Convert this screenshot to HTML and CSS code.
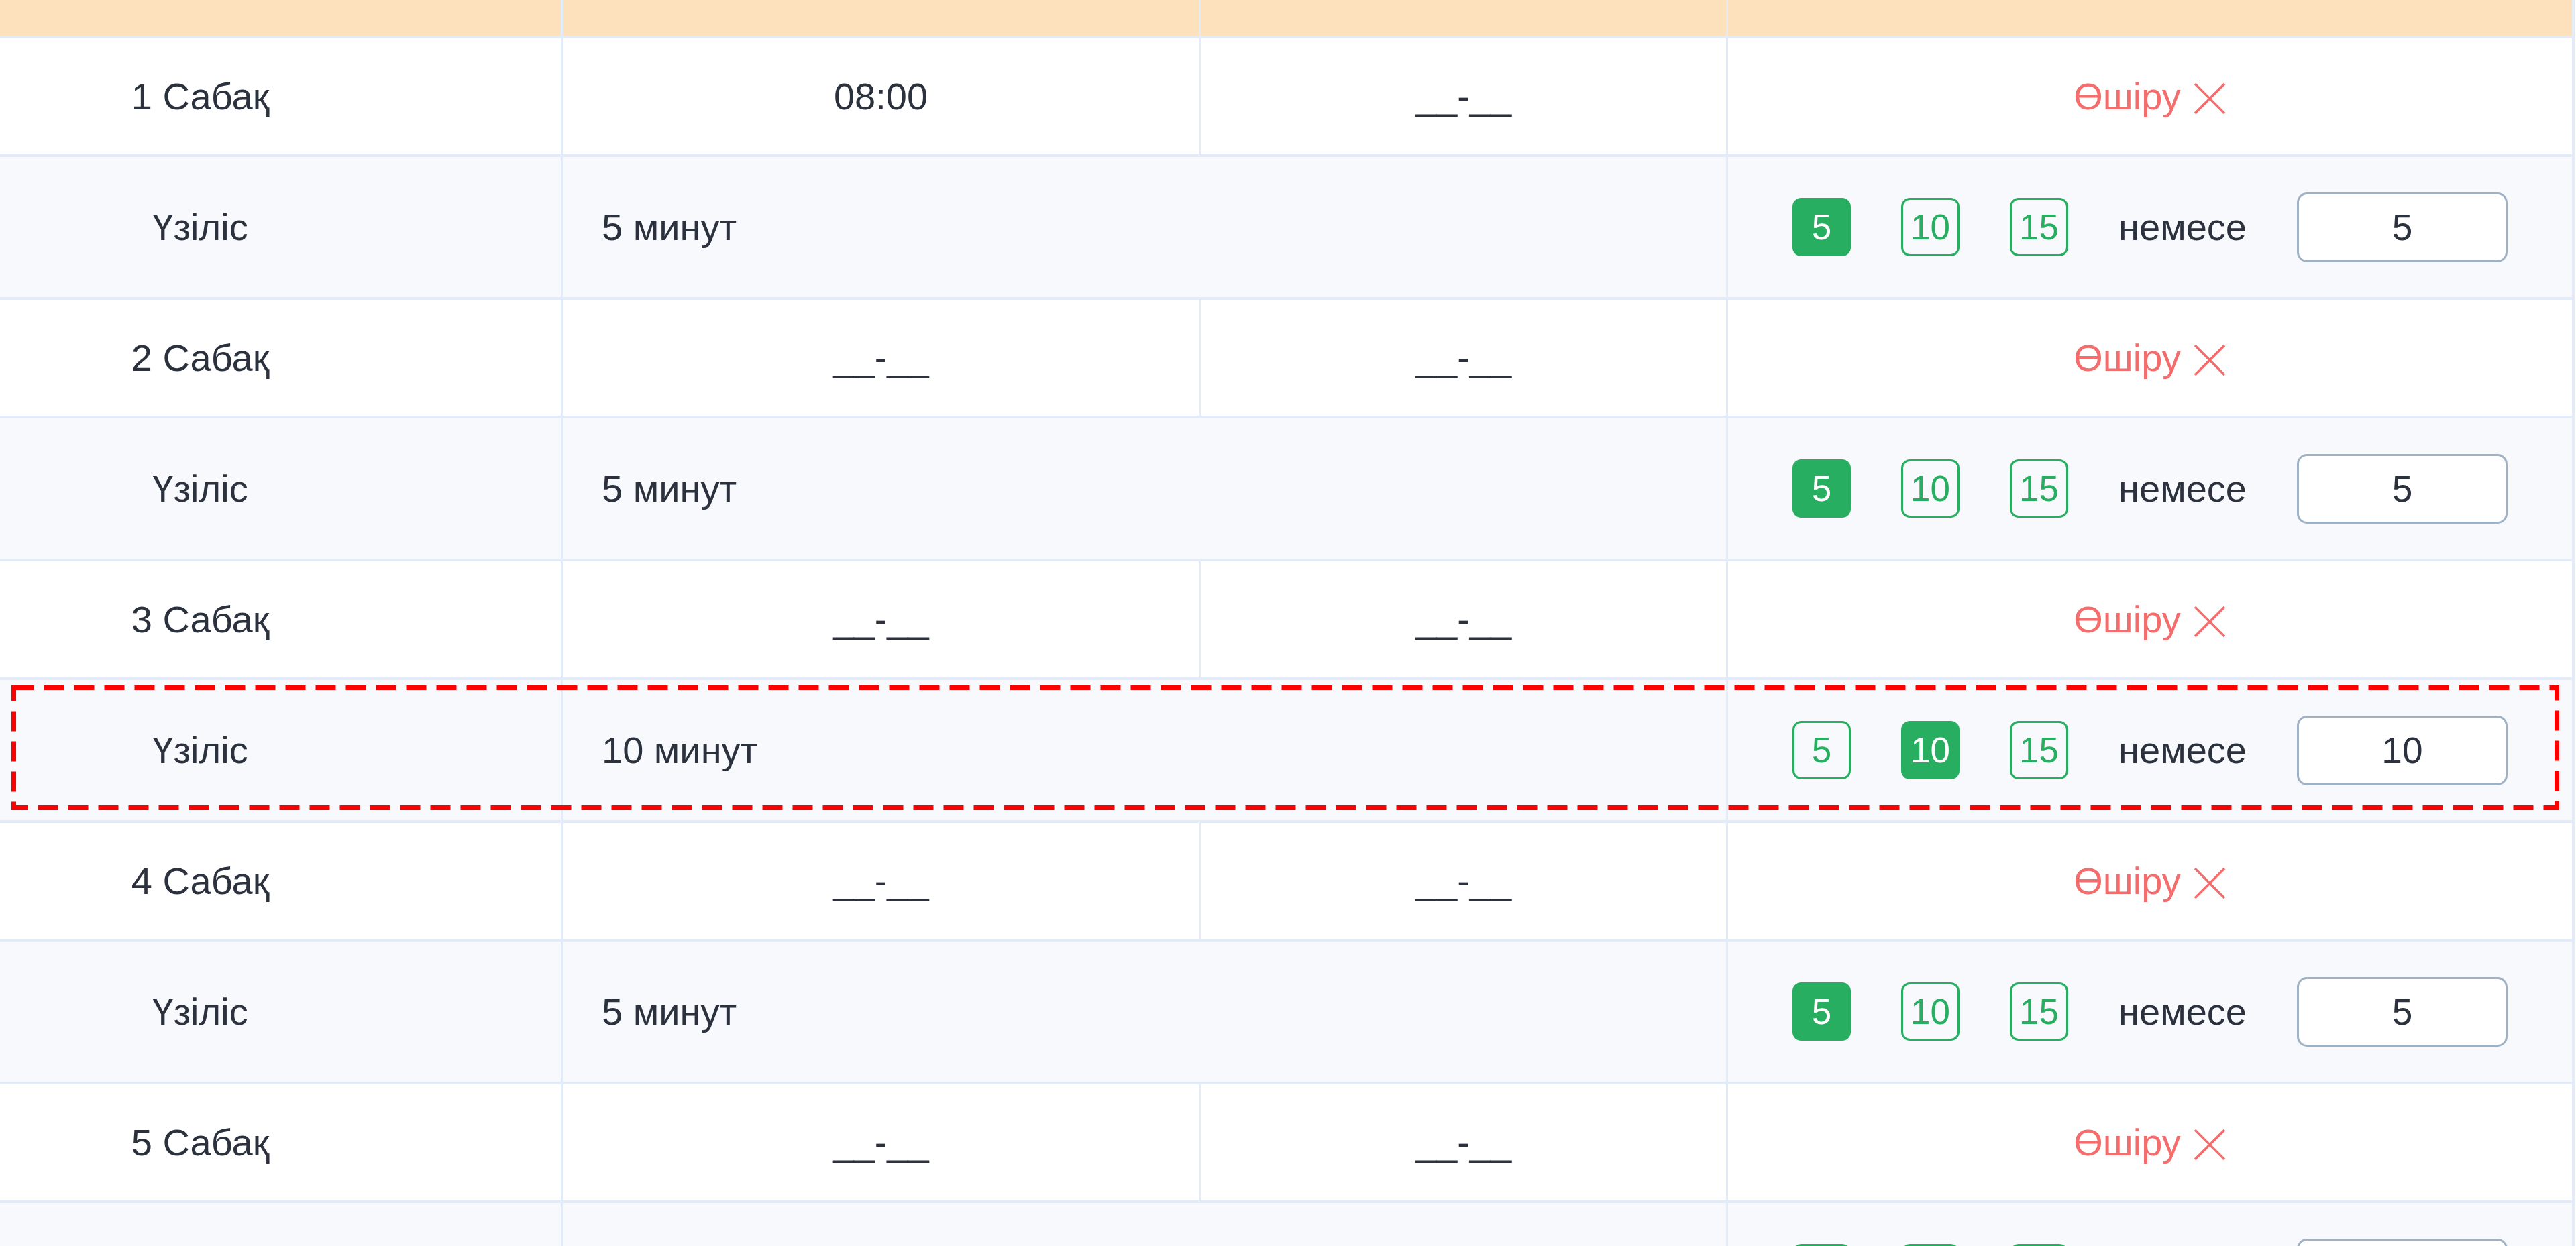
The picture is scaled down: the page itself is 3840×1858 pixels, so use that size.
FILE: index.html
```html
<!DOCTYPE html>
<html lang="kk">
<head>
    <meta charset="UTF-8">
    <meta name="viewport" content="width=device-width, initial-scale=1.0">
    <title>Сабақ кестесі</title>
    <link rel="stylesheet" href="styles.css">
</head>
<body>
    <div class="page">
        <div class="schedule">
            <div class="row row-head">
                <div class="cell"></div>
                <div class="cell"></div>
                <div class="cell"></div>
                <div class="cell"></div>
            </div>

            <div class="row row-lesson">
                <div class="cell">1 Сабақ</div>
                <div class="cell">08:00</div>
                <div class="cell">__-__</div>
                <div class="cell"><span class="delete">Өшіру <svg class="icon-close" viewBox="0 0 50 50"><path d="M3 3 L47 47 M47 3 L3 47"/></svg></span></div>
            </div>
            <div class="row row-break">
                <div class="cell">Үзіліс</div>
                <div class="cell cell-left">5 минут</div>
                <div class="cell">
                    <div class="choose">
                        <span class="opt active">5</span>
                        <span class="opt">10</span>
                        <span class="opt">15</span>
                        <span class="or">немесе</span>
                        <input class="minutes" type="text" value="5">
                    </div>
                </div>
            </div>

            <div class="row row-lesson">
                <div class="cell">2 Сабақ</div>
                <div class="cell">__-__</div>
                <div class="cell">__-__</div>
                <div class="cell"><span class="delete">Өшіру <svg class="icon-close" viewBox="0 0 50 50"><path d="M3 3 L47 47 M47 3 L3 47"/></svg></span></div>
            </div>
            <div class="row row-break">
                <div class="cell">Үзіліс</div>
                <div class="cell cell-left">5 минут</div>
                <div class="cell">
                    <div class="choose">
                        <span class="opt active">5</span>
                        <span class="opt">10</span>
                        <span class="opt">15</span>
                        <span class="or">немесе</span>
                        <input class="minutes" type="text" value="5">
                    </div>
                </div>
            </div>

            <div class="row row-lesson">
                <div class="cell">3 Сабақ</div>
                <div class="cell">__-__</div>
                <div class="cell">__-__</div>
                <div class="cell"><span class="delete">Өшіру <svg class="icon-close" viewBox="0 0 50 50"><path d="M3 3 L47 47 M47 3 L3 47"/></svg></span></div>
            </div>
            <div class="row row-break">
                <div class="cell">Үзіліс</div>
                <div class="cell cell-left">10 минут</div>
                <div class="cell">
                    <div class="choose">
                        <span class="opt">5</span>
                        <span class="opt active">10</span>
                        <span class="opt">15</span>
                        <span class="or">немесе</span>
                        <input class="minutes" type="text" value="10">
                    </div>
                </div>
            </div>

            <div class="row row-lesson">
                <div class="cell">4 Сабақ</div>
                <div class="cell">__-__</div>
                <div class="cell">__-__</div>
                <div class="cell"><span class="delete">Өшіру <svg class="icon-close" viewBox="0 0 50 50"><path d="M3 3 L47 47 M47 3 L3 47"/></svg></span></div>
            </div>
            <div class="row row-break">
                <div class="cell">Үзіліс</div>
                <div class="cell cell-left">5 минут</div>
                <div class="cell">
                    <div class="choose">
                        <span class="opt active">5</span>
                        <span class="opt">10</span>
                        <span class="opt">15</span>
                        <span class="or">немесе</span>
                        <input class="minutes" type="text" value="5">
                    </div>
                </div>
            </div>

            <div class="row row-lesson">
                <div class="cell">5 Сабақ</div>
                <div class="cell">__-__</div>
                <div class="cell">__-__</div>
                <div class="cell"><span class="delete">Өшіру <svg class="icon-close" viewBox="0 0 50 50"><path d="M3 3 L47 47 M47 3 L3 47"/></svg></span></div>
            </div>
            <div class="row row-break">
                <div class="cell"></div>
                <div class="cell cell-left"></div>
                <div class="cell">
                    <div class="choose">
                        <span class="opt active">5</span>
                        <span class="opt">10</span>
                        <span class="opt">15</span>
                        <span class="or">немесе</span>
                        <input class="minutes" type="text" value="5">
                    </div>
                </div>
            </div>
        </div>

        <!-- marked row -->
        <div class="highlight">
            <svg viewBox="0 0 3798 186" width="3798" height="186">
                <rect x="3.5" y="3.5" width="3791" height="179" fill="none" stroke="#ff0000" stroke-width="7" stroke-dasharray="30 15"/>
            </svg>
        </div>
    </div>
</body>
</html>
```

FILE: styles.css
```css
html, body {
    margin: 0;
    overflow: hidden;
}
body {
    font-family: "Liberation Sans", Arial, sans-serif;
    color: #2b313d;
    background: #fff;
}
.page {
    position: relative;
    height: 1858px;
    overflow: hidden;
}
.schedule {
    margin: 0 2px 0 -239px;
    border-right: 4px solid #e3ebf8;
}
.row {
    display: grid;
    grid-template-columns: 1078px 951px 786px 1fr;
    border-bottom: 4px solid #e3ebf8;
    box-sizing: border-box;
}
.row-head {
    height: 57px;
    background: #fde0bc;
}
.row-lesson {
    height: 177px;
    background: #fff;
}
.row-break {
    height: 213px;
    background: #f7f9fd;
    grid-template-columns: 1078px 1737px 1fr;
}
.cell {
    display: flex;
    align-items: center;
    justify-content: center;
    border-right: 3px solid #e3ebf8;
    font-size: 56px;
    box-sizing: border-box;
    min-width: 0;
}
.cell:last-child {
    border-right: none;
}
.cell-left {
    justify-content: flex-start;
    padding-left: 58px;
}
.delete {
    display: inline-flex;
    align-items: center;
    gap: 18px;
    color: #f56c6c;
    cursor: pointer;
}
.icon-close {
    width: 50px;
    height: 50px;
    margin-top: 6px;
}
.icon-close path {
    stroke: #f56c6c;
    stroke-width: 3.5;
    fill: none;
}
.choose {
    display: flex;
    align-items: center;
    gap: 75px;
}
.opt {
    display: flex;
    align-items: center;
    justify-content: center;
    width: 87px;
    height: 87px;
    box-sizing: border-box;
    border: 3px solid #27ae60;
    border-radius: 13px;
    color: #27ae60;
    font-size: 53px;
    cursor: pointer;
}
.opt.active {
    background: #27ae60;
    color: #fff;
}
.or {
    font-size: 56px;
}
.minutes {
    width: 314px;
    height: 104px;
    box-sizing: border-box;
    border: 3px solid #9fb1c4;
    border-radius: 15px;
    background: #fff;
    text-align: center;
    font-family: inherit;
    font-size: 55px;
    color: #2b313d;
    padding: 0;
}
.highlight {
    position: absolute;
    left: 17px;
    top: 1022px;
    width: 3798px;
    height: 186px;
    pointer-events: none;
}
.highlight svg {
    display: block;
}
```
